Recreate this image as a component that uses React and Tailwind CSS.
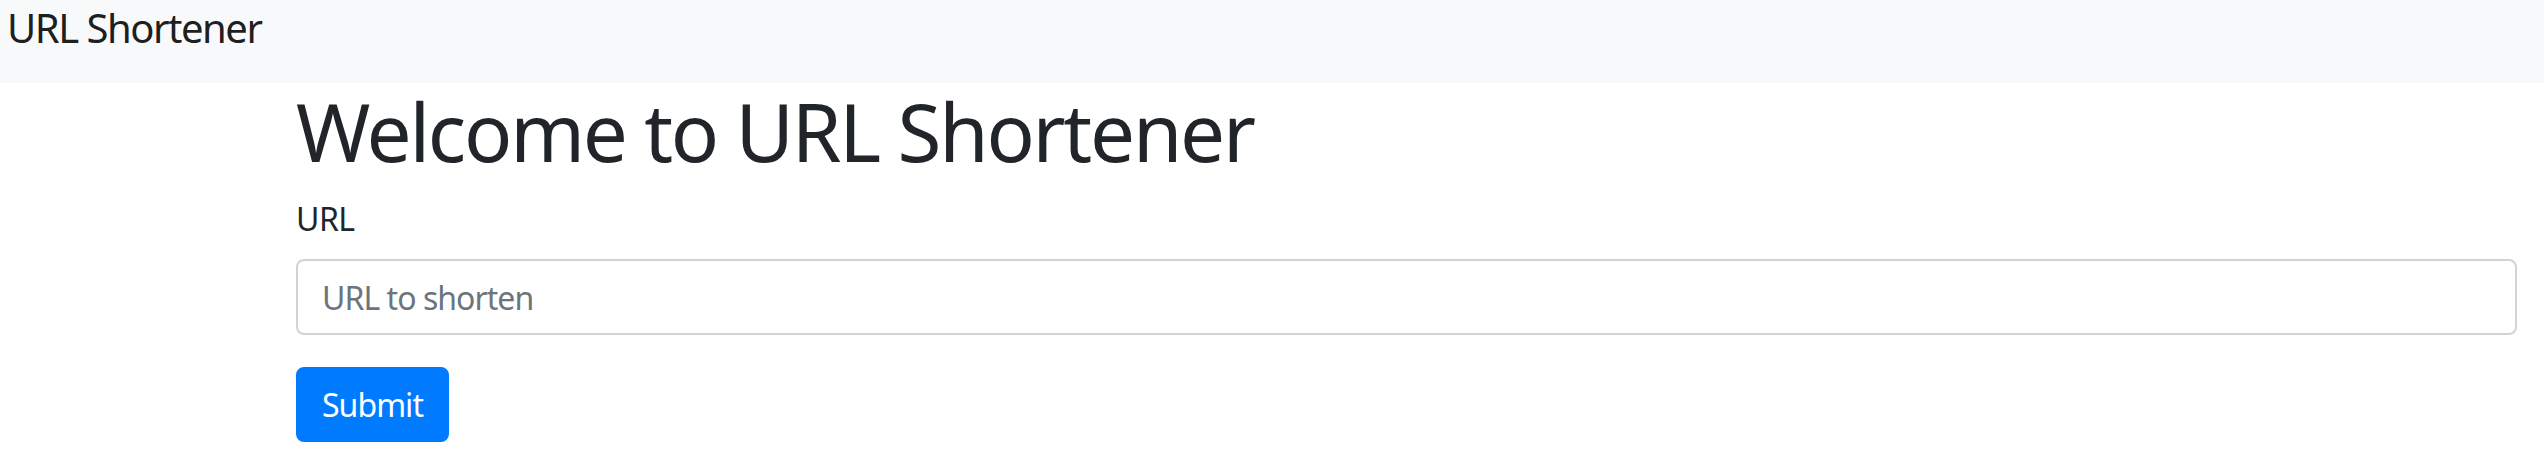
import React from 'react';

const App = () => {
  return (
    <div className="min-h-screen bg-white text-[#212529] tracking-[-0.03em]" style={{ fontFamily: '"Noto Sans", "Open Sans", sans-serif' }}>
      {/* navbar */}
      <nav className="h-[83px] bg-[#f8f9fa] pl-[7px] pt-[4px]">
        <a className="block text-[40px] leading-[48px] tracking-[-0.037em] text-black/90">URL Shortener</a>
      </nav>

      <main className="ml-[296px] mr-[27px]">
        <h1 className="text-[80px] leading-[96px] mb-[16px] font-normal tracking-[-0.028em]">Welcome to URL Shortener</h1>

        <form className="flex flex-col items-start" onSubmit={(e) => e.preventDefault()}>
          <div className="w-full mb-[32px]">
            <label className="block text-[32px] leading-[48px] mb-[16px]">URL</label>
            <input
              type="text"
              placeholder="URL to shorten"
              className="w-full h-[76px] px-[24px] text-[32px] tracking-[-0.03em] border-2 border-[#ced4da] rounded-[8px] outline-none placeholder:text-[#6c757d]"
            />
          </div>
          <button className="h-[75px] px-[24px] border-2 border-[#007bff] rounded-[8px] bg-[#007bff] text-white text-[32px] leading-[48px] tracking-[-0.03em]">Submit</button>
        </form>
      </main>
    </div>
  );
};

export default App;
